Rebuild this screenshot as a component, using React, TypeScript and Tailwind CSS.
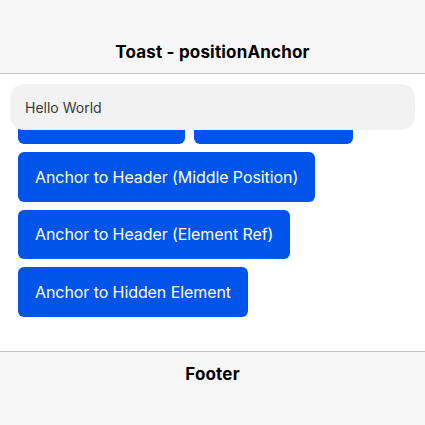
export default function App() {
  const btn =
    'h-[49.5px] shrink-0 rounded-[6px] bg-[#0054e9] px-[17px] text-[16px] tracking-[-0.005em] text-white whitespace-nowrap';

  return (
    <div className="relative flex h-[425px] flex-col overflow-hidden bg-white font-['Inter',sans-serif]">
      {/* Header */}
      <header className="flex h-[74px] shrink-0 items-end border-b border-[#c6c6c8] bg-[#f7f7f7]">
        <div className="flex h-[44px] w-full items-center justify-center pt-[3px]">
          <h1 className="text-[17px] font-bold tracking-[0.01em] text-black">Toast - positionAnchor</h1>
        </div>
      </header>

      {/* Content */}
      <main className="flex flex-1 flex-col items-start gap-2 px-[18px] pt-[20.5px]">
        <div className="flex gap-[9px]">
          <button className={btn}>Anchor to Header</button>
          <button className={btn}>Anchor to Footer</button>
        </div>
        <button className={btn}>Anchor to Header (Middle Position)</button>
        <button className={btn}>Anchor to Header (Element Ref)</button>
        <button className={btn}>Anchor to Hidden Element</button>
      </main>

      {/* Footer */}
      <footer className="h-[74px] shrink-0 border-t border-[#c6c6c8] bg-[#f7f7f7]">
        <div className="flex h-[44px] items-center justify-center pt-[1px]">
          <span className="text-[17px] font-bold tracking-[0.01em] text-black">Footer</span>
        </div>
      </footer>

      {/* Toast */}
      <div className="absolute left-[10px] right-[10px] top-[84px] flex h-[46px] items-center rounded-[14px] bg-[#f2f2f2] px-[15px]">
        <span className="text-[14px] text-[#3a3a3a]">Hello World</span>
      </div>
    </div>
  );
}
